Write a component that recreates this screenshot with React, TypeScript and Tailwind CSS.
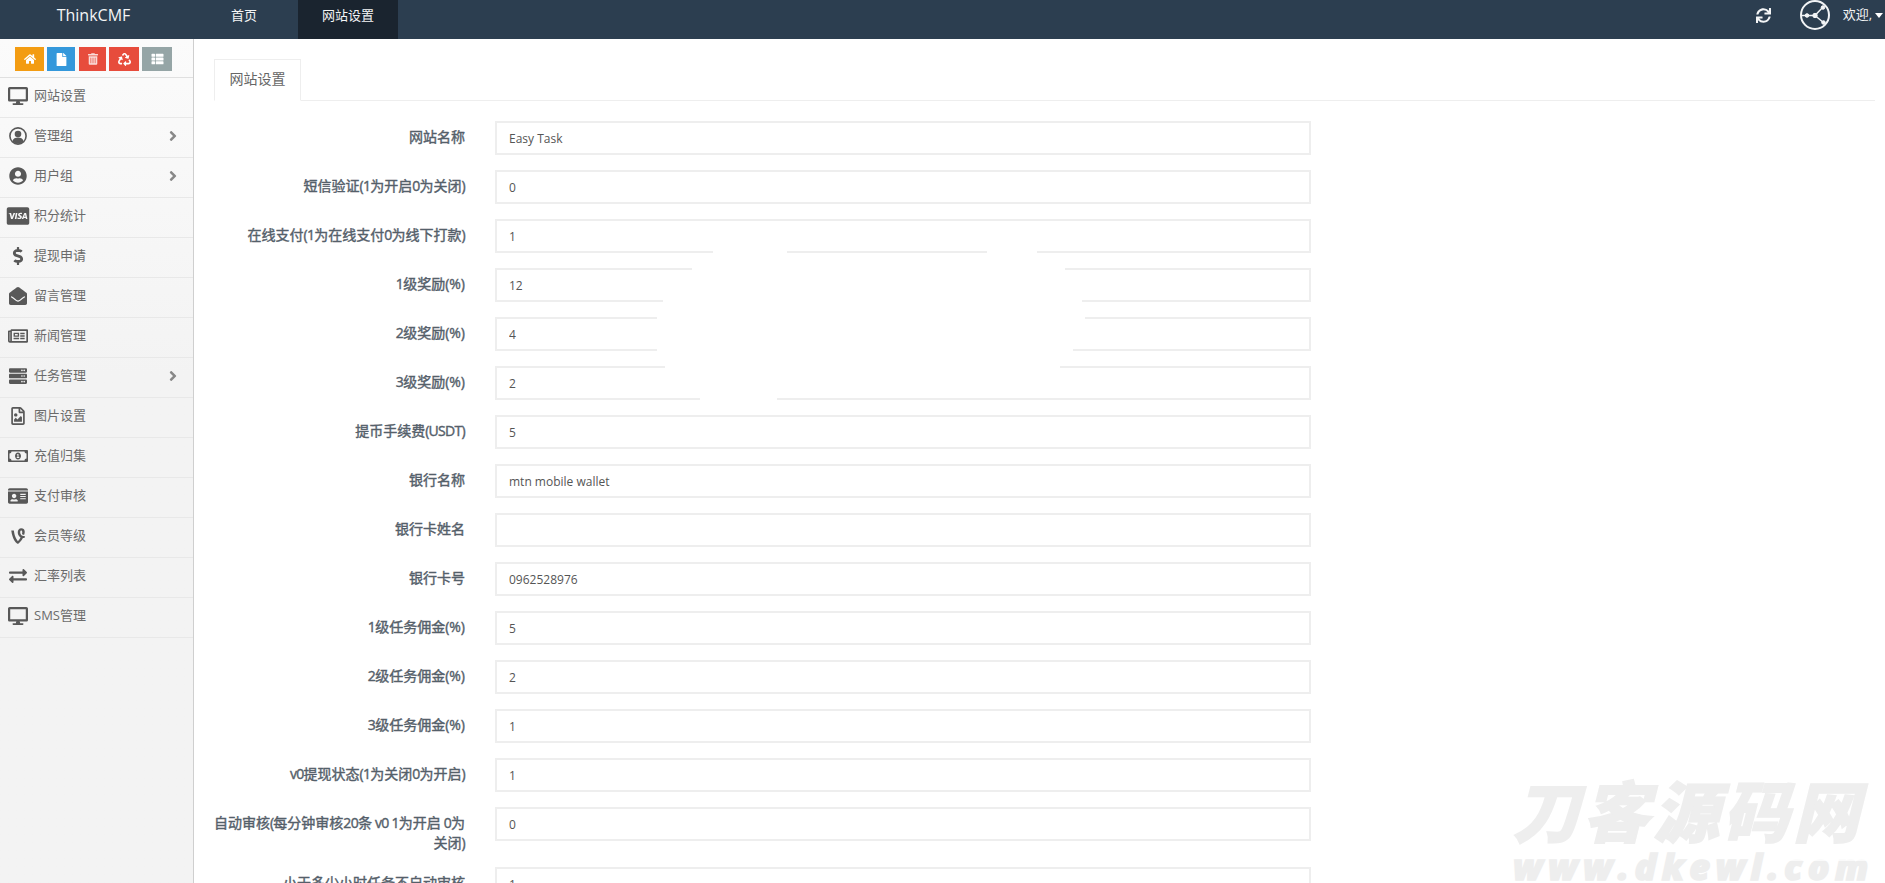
import React from 'react';
import {
  FaAngleRight,
  FaCcVisa,
  FaDesktop,
  FaDollarSign,
  FaEnvelopeOpen,
  FaExchangeAlt,
  FaFile,
  FaHome,
  FaIdCard,
  FaRecycle,
  FaRegFileImage,
  FaRegMoneyBillAlt,
  FaRegNewspaper,
  FaServer,
  FaSync,
  FaThList,
  FaTrashAlt,
  FaUserCircle,
  FaVine,
} from 'react-icons/fa';

const FONT = 'font-["Open_Sans","Noto_Sans_CJK_SC",sans-serif]';

const UserCircleOutline = () => (
  <svg viewBox="0 0 18 18" className="w-[18px] h-[18px]" fill="currentColor">
    <circle cx="9" cy="9" r="8.1" fill="none" stroke="currentColor" strokeWidth="1.6" />
    <circle cx="9" cy="7" r="3.3" />
    <path d="M3.4 14.4c.7-2.9 3-3.9 5.6-3.9s4.9 1 5.6 3.9A8 8 0 0 1 3.4 14.4z" />
  </svg>
);

const MENU = [
  { label: '网站设置', icon: <FaDesktop className="w-[20px] h-[18px]" /> },
  { label: '管理组', icon: <UserCircleOutline />, more: true },
  { label: '用户组', icon: <FaUserCircle className="w-[18px] h-[18px]" />, more: true },
  { label: '积分统计', icon: <FaCcVisa className="w-[24px] h-[20px]" /> },
  { label: '提现申请', icon: <FaDollarSign className="w-[12px] h-[18px]" /> },
  { label: '留言管理', icon: <FaEnvelopeOpen className="w-[18px] h-[18px]" /> },
  { label: '新闻管理', icon: <FaRegNewspaper className="w-[20px] h-[18px]" /> },
  { label: '任务管理', icon: <FaServer className="w-[18px] h-[18px]" />, more: true },
  { label: '图片设置', icon: <FaRegFileImage className="w-[16px] h-[18px]" /> },
  { label: '充值归集', icon: <FaRegMoneyBillAlt className="w-[20px] h-[18px]" /> },
  { label: '支付审核', icon: <FaIdCard className="w-[20px] h-[18px]" /> },
  { label: '会员等级', icon: <FaVine className="w-[16px] h-[18px]" /> },
  { label: '汇率列表', icon: <FaExchangeAlt className="w-[18px] h-[18px]" /> },
  { label: 'SMS管理', icon: <FaDesktop className="w-[20px] h-[18px]" /> },
];

const FIELDS = [
  ['网站名称', 'Easy Task'],
  ['短信验证(1为开启0为关闭)', '0'],
  ['在线支付(1为在线支付0为线下打款)', '1'],
  ['1级奖励(%)', '12'],
  ['2级奖励(%)', '4'],
  ['3级奖励(%)', '2'],
  ['提币手续费(USDT)', '5'],
  ['银行名称', 'mtn mobile wallet'],
  ['银行卡姓名', ''],
  ['银行卡号', '0962528976'],
  ['1级任务佣金(%)', '5'],
  ['2级任务佣金(%)', '2'],
  ['3级任务佣金(%)', '1'],
  ['v0提现状态(1为关闭0为开启)', '1'],
  ['自动审核(每分钟审核20条 v0 1为开启 0为关闭)', '0'],
  ['小于多少小时任务不自动审核', '1'],
];

const ShareAvatar = () => (
  <svg viewBox="0 0 30 30" className="w-[30px] h-[30px]" fill="none" stroke="#f2f4f6">
    <circle cx="15" cy="15" r="14" strokeWidth="2" />
    <path d="M1.5 15.5 H15 L23 7 M15 15.5 L24 23" strokeWidth="1.5" />
    <circle cx="7" cy="15.5" r="1.8" fill="#f2f4f6" />
    <circle cx="15" cy="15.5" r="2.2" fill="#f2f4f6" />
    <circle cx="23" cy="7.5" r="1.8" fill="#f2f4f6" />
    <circle cx="23.5" cy="22.5" r="1.8" fill="#f2f4f6" />
  </svg>
);

// latin runs sit tighter than the font's own metrics in the reference
const FieldLabel = ({ text }: { text: string }) => (
  <>
    {text.split(/([\x20-\x7e]+)/).map((part, i) =>
      i % 2 === 1 && !part.includes('%') ? <span key={i} className="tracking-[-0.7px]">{part}</span> : part
    )}
  </>
);

const App: React.FC = () => {
  return (
    <div className={`relative h-screen overflow-hidden bg-white ${FONT}`}>
      <header className="h-[39px] bg-[#2c3e50] flex text-[#f4f5f6]">
        <div className="w-[193px] pt-[3px] text-center text-[16px] leading-[24px] pr-[6px]">ThinkCMF</div>
        <nav className="flex h-full ml-[14px] text-[13px]">
          <a className="w-[91px] pl-[24px] pt-[6px]">首页</a>
          <a className="w-[100px] pl-[24px] pt-[6px] bg-[#1a242f]">网站设置</a>
        </nav>
        <div className="ml-auto h-[30px] flex items-center">
          <FaSync className="w-[15px] h-[15px] mr-[29px]" />
          <ShareAvatar />
          <span className="ml-[13px] text-[13px]">欢迎,</span>
          <span className="ml-[3px] mr-[2px] border-x-[4px] border-x-transparent border-t-[5px] border-t-white" />
        </div>
      </header>

      <div className="flex h-[844px]">
        <aside className="w-[194px] shrink-0 bg-linear-to-b from-[#fbfbfb] to-[#f3f3f3] to-40% border-r border-[#cfcfcf]">
          <div className="h-[39px] pt-[8px] pl-[15px] flex gap-[3px] border-b border-[#e0e0e0] text-white">
            <span className="w-[29px] h-[24px] bg-[#f39c12] flex items-center justify-center"><FaHome className="w-[12px] h-[12px]" /></span>
            <span className="w-[28px] h-[24px] bg-[#3498db] flex items-center justify-center"><FaFile className="w-[11px] h-[13px]" /></span>
            <span className="w-[27px] ml-[1px] h-[24px] bg-[#e74c3c] flex items-center justify-center"><FaTrashAlt className="w-[10px] h-[12px] opacity-80" /></span>
            <span className="w-[30px] h-[24px] bg-[#e74c3c] flex items-center justify-center"><FaRecycle className="w-[13px] h-[13px]" /></span>
            <span className="w-[30px] h-[24px] bg-[#95a5a6] flex items-center justify-center"><FaThList className="w-[13px] h-[12px]" /></span>
          </div>
          <ul>
            {MENU.map((item) => (
              <li
                key={item.label}
                className="h-[40px] pb-[3px] flex items-center border-b border-[#e8e8e8] text-[13px] text-[#6b6b6b]"
              >
                <span className="w-[34px] pl-[2px] flex justify-center text-[#585858]">{item.icon}</span>
                <span>{item.label}</span>
                {item.more && <FaAngleRight className="ml-auto mr-[13px] w-[14px] h-[16px] text-[#888]" />}
              </li>
            ))}
          </ul>
        </aside>

        <main className="flex-1 pl-[20px] pr-[10px] pt-[20px]">
          <div className="h-[42px] border-b border-[#eeeeee]">
            <div className="w-[87px] h-[42px] pb-[3px] border border-[#eeeeee] border-b-white bg-white flex items-center justify-center text-[14px] text-[#666]">
              网站设置
            </div>
          </div>
          <form className="pt-[20px]">
            {FIELDS.map(([label, value], i) => (
              <div key={label} className={`flex gap-[30px] ${i === 14 ? 'mb-[14px]' : 'mb-[15px]'}`}>
                <label className="w-[252px] -ml-px pt-[6px] text-right text-[14px] leading-[20px] text-[#55606a] [-webkit-text-stroke:0.4px_#55606a]">
                  <FieldLabel text={label} />
                </label>
                <input
                  readOnly
                  value={value}
                  className="w-[816px] h-[34px] px-[12px] border-2 border-[#eeeeee] text-[12px] text-[#555] outline-none bg-white"
                />
              </div>
            ))}
          </form>
        </main>
      </div>

      {/* smudge painted over the middle rows of the screenshot */}
      <div className="absolute top-[251px] left-[713px] w-[74px] h-[3px] bg-white" />
      <div className="absolute top-[251px] left-[987px] w-[50px] h-[3px] bg-white" />
      <div className="absolute top-[267px] left-[692px] w-[373px] h-[3px] bg-white" />
      <div className="absolute top-[300px] left-[663px] w-[419px] h-[3px] bg-white" />
      <div className="absolute top-[316px] left-[657px] w-[428px] h-[3px] bg-white" />
      <div className="absolute top-[349px] left-[657px] w-[416px] h-[3px] bg-white" />
      <div className="absolute top-[365px] left-[665px] w-[395px] h-[3px] bg-white" />
      <div className="absolute top-[398px] left-[700px] w-[77px] h-[3px] bg-white" />

      {/* site watermark */}
      <div className="absolute left-[1513px] top-[770px] w-[360px] text-[#eeeeee] italic font-black [-webkit-text-stroke:1.5px_#eeeeee] pointer-events-none">
        <div className="text-[66px] leading-[82px] tracking-[4px] whitespace-nowrap">刀客源码网</div>
        <div className="text-[36px] leading-[30px] tracking-[5.4px] whitespace-nowrap">www.dkewl.com</div>
        <div className="absolute left-[263px] top-[85px] w-[90px] h-[6px] bg-white opacity-70" />
      </div>
    </div>
  );
};

export default App;
